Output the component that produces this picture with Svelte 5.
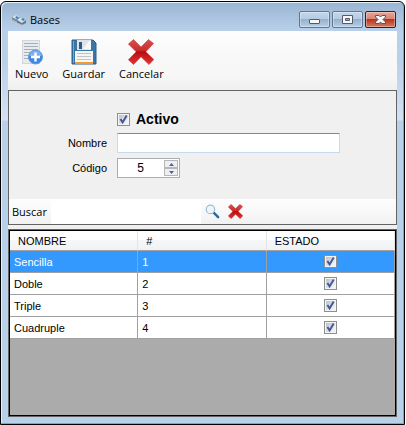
<script>
    let active = $state(true)
    let name = $state('')
    let code = $state(5)
    let search = $state('')
    let selected = $state(1)
    let rows = $state([
        { id: 1, name: 'Sencilla', active: true },
        { id: 2, name: 'Doble', active: true },
        { id: 3, name: 'Triple', active: true },
        { id: 4, name: 'Cuadruple', active: true }
    ])
</script>

{#snippet tick()}
    <svg class='tick' viewBox='0 0 13 13'>
        <path d='M3.4 6 L5.6 9.400 L9.700 2.600' fill='none' stroke='#43599b' stroke-width='2' />
    </svg>
{/snippet}

{#snippet cross()}
    <svg viewBox='0 0 26 26'>
        <defs>
            <linearGradient id='red' x1='0' y1='0' x2='0' y2='1'>
                <stop offset='0' stop-color='#d8504c' />
                <stop offset='.42' stop-color='#c9302f' />
                <stop offset='.5' stop-color='#b80d10' />
                <stop offset='1' stop-color='#e33434' />
            </linearGradient>
        </defs>
        <path d='M5.5 .5 L13 8 L20.5 .5 L25.5 4.5 L17.8 12.8 L25.8 20.5 L21 25.5 L13 17.8 L5.5 25.5 L.4 20.8 L8.2 12.8 L.4 5 Z' fill='url(#red)' stroke='#c93936' stroke-width='.6' />
    </svg>
{/snippet}

<div class='window'>
    <header>
        <svg class='app-icon' width='16' height='16' viewBox='0 0 16 16'>
            <path d='M1 5 L5 3 L9 5 L9 8 L5 10 L1 8 Z' fill='#758da3' />
            <path d='M1 5 L5 3 L9 5 L5 7 Z' fill='#dceaf4' />
            <path d='M6 8 L10 5 L15 8 L15 11 L11 13 L6 11 Z' fill='#66798b' />
            <path d='M6 8 L10 5 L15 8 L11 11 Z' fill='#d5e3ed' />
            <path d='M4 5 L6 4 L8 6 L6 7 Z M10 7 L12 6 L14 8 L12 9 Z' fill='#3c86bd' />
            <path d='M1 8 L5 10 M6 11 L11 13' stroke='#c8b6a3' />
        </svg>
        <h1>Bases</h1>
        <div class='window-btns'>
            <button aria-label='Minimizar'>
                <svg width='29' height='15' viewBox='0 0 29 15'>
                    <rect x='9.500' y='7.500' width='10' height='4' rx='.5' fill='#f7f7f7' stroke='#545a6b' />
                </svg>
            </button>
            <button aria-label='Maximizar'>
                <svg width='29' height='15' viewBox='0 0 29 15'>
                    <path fill-rule='evenodd' d='M9.500 3.500h10v8h-10z M12.500 6.500h4v2h-4z' fill='#f7f7f7' stroke='#545a6b' />
                </svg>
            </button>
            <button class='close-btn' aria-label='Cerrar'>
                <svg width='29' height='15' viewBox='0 0 29 15'>
                    <path d='M9.500 3.500h3.500l1.500 1.500l1.500 -1.500h3.500v1.500l-2.500 2.500l2.500 2.500v1.500h-3.500l-1.500 -1.500l-1.500 1.500h-3.500v-1.500l2.500 -2.500l-2.500 -2.500z' fill='#f7f7f7' stroke='#545468' />
                </svg>
            </button>
        </div>
    </header>

    <main>
        <div class='toolbar'>
            <button>
                <svg viewBox='0 0 26 26'>
                    <rect x='3.500' y='1.500' width='17' height='23' fill='#e8ebee' stroke='#d3d6da' />
                    <path d='M5 4.500h14M5 7.500h14M5 10.500h14M5 13.500h9M5 16.500h6M5 19.500h5' stroke='#a9afb6' />
                    <circle cx='16.500' cy='18' r='7' fill='#3b87e6' stroke='#7097c8' />
                    <path d='M10.500 17a6 5.500 0 0 1 12 0z' fill='#78b2f3' />
                    <path d='M16.500 13.500v9M12 18h9' stroke='#fff' stroke-width='2.400' />
                </svg>
                Nuevo
            </button>
            <button>
                <svg viewBox='0 0 26 26'>
                    <path d='M1 1h21l3 3v21h-24z' fill='#3977a8' stroke='#2d5e88' />
                    <path d='M2.500 2v22' stroke='#77a6cc' />
                    <rect x='6' y='1' width='14' height='10' fill='#dde3e8' />
                    <rect x='8' y='3' width='3' height='7' fill='#345a7a' />
                    <path d='M12 10l6 -8h2v8z' fill='#f7f9fa' />
                    <rect x='4' y='12' width='18' height='11' fill='#f5f5f3' />
                    <path d='M6 14.500h14M6 17.500h14M6 20.500h14' stroke='#c0c4c8' />
                    <rect x='4' y='23' width='18' height='2' fill='#f09a32' />
                </svg>
                Guardar
            </button>
            <button>
                {@render cross()}
                Cancelar
            </button>
        </div>

        <section class='panel'>
            <form class='fields'>
                <label class='active-row'>
                    <span class='check'>
                        <input type='checkbox' bind:checked={ active } />
                        {#if active}{@render tick()}{/if}
                    </span>
                    Activo
                </label>
                <label for='name'>Nombre</label>
                <input id='name' class='name' type='text' bind:value={ name } />
                <label for='code'>Código</label>
                <div class='spinner'>
                    <input id='code' type='text' inputmode='numeric' bind:value={ code } />
                    <div class='arrows'>
                        <button type='button' aria-label='Aumentar' onclick={ () => code++ }>
                            <svg width='5' height='3' viewBox='0 0 5 3'><path d='M0 3L2.500 0L5 3z' /></svg>
                        </button>
                        <button type='button' aria-label='Disminuir' onclick={ () => code-- }>
                            <svg width='5' height='3' viewBox='0 0 5 3'><path d='M0 0L2.500 3L5 0z' /></svg>
                        </button>
                    </div>
                </div>
            </form>

            <div class='search'>
                <label for='search'>Buscar</label>
                <input id='search' type='text' bind:value={ search } />
                <button aria-label='Buscar'>
                    <svg viewBox='0 0 16 16'>
                        <path d='M9 9L14 14' stroke='#2a66a3' stroke-width='2.600' stroke-linecap='round' />
                        <circle cx='5.800' cy='5.800' r='4.500' fill='#eef6fb' stroke='#9dbdd2' stroke-width='1.300' />
                    </svg>
                </button>
                <button aria-label='Limpiar' onclick={ () => { search = '' }}>
                    {@render cross()}
                </button>
            </div>
        </section>

        <div class='grid'>
            <table>
                <thead>
                    <tr>
                        <th>NOMBRE</th>
                        <th>#</th>
                        <th>ESTADO</th>
                    </tr>
                </thead>
                <tbody>
                    {#each rows as row (row.id)}
                        <tr class:selected={ row.id === selected } onclick={ () => { selected = row.id }}>
                            <td>{ row.name }</td>
                            <td>{ row.id }</td>
                            <td class='state'>
                                <span class='check'>
                                    <input type='checkbox' aria-label={ row.name } bind:checked={ row.active } />
                                    {#if row.active}{@render tick()}{/if}
                                </span>
                            </td>
                        </tr>
                    {/each}
                </tbody>
            </table>
        </div>
    </main>
</div>

<style>
    :global(body) {
        margin: 0;
        background: #fff;
    }

    .window {
        box-sizing: border-box;
        min-height: calc(100vh - 1px);
        margin: 1px 1px 0 0;
        padding: 0 7px 7px;
        border: 1px solid #000;
        border-radius: 6px 6px 0 0;
        background: linear-gradient(#9ab5d2, #b9d0ea 29px, #b9d0ea 60px, #d5e1f3 118px, #b9d0ea 119px);
        box-shadow: inset -1px -1px #35c5e4, inset 1px 1px #e6f0f8;
        display: flex;
        flex-direction: column;
        font-family: 'Liberation Sans', Arial, sans-serif;
        font-size: 11px;
        color: #000;
    }

    button {
        margin: 0;
        padding: 0;
        border: 0;
        background: none;
        font: inherit;
        color: inherit;
    }

    input {
        box-sizing: border-box;
        min-width: 0;
        margin: 0;
        font: inherit;
        outline: none;
    }

    svg {
        display: block;
    }

    header {
        height: 29px;
        display: flex;
        align-items: center;
        padding: 6px 1px 0 3px;
        box-sizing: border-box;
    }

    h1 {
        flex: 1;
        margin: 0 0 0 3px;
        font: 11px/16px 'Open Sans', 'Noto Sans', sans-serif;
    }

    .window-btns {
        display: flex;
        gap: 2px;
    }

    .window-btns button {
        border: 1px solid #5f7690;
        border-radius: 2px;
        background: linear-gradient(#c3d6ea, #b5cbe1 48%, #97b1cd 50%, #b5cee8);
        box-shadow: inset 0 0 0 1px rgba(255, 255, 255, .35);
    }

    .window-btns .close-btn {
        border-color: #4b1520;
        background: linear-gradient(#e7a598, #d98370 48%, #b8351c 50%, #d47a5e);
    }

    main {
        flex: 1;
        display: flex;
        flex-direction: column;
        background: #f0f0f0;
    }

    .toolbar {
        height: 59px;
        box-sizing: border-box;
        padding: 8px 7px 0;
        display: flex;
        align-items: flex-start;
        gap: 14px;
        background: linear-gradient(#fefefe, #f8f8f8 40%, #f7f7f7 75%, #efefef);
        font: 11px/18px 'Open Sans', 'Noto Sans', sans-serif;
    }

    .toolbar svg {
        width: 26px;
        height: 26px;
        margin: 0 auto;
    }

    .panel {
        border: 1px solid #646464;
    }

    .fields {
        padding: 19px 56px 21px 0;
        display: grid;
        grid-template-columns: 98px 1fr;
        gap: 5px 10px;
        align-items: center;
    }

    .fields > label {
        text-align: right;
    }

    .fields .active-row {
        grid-column: 2;
        display: flex;
        align-items: center;
        gap: 6px;
        font: bold 14px/18px 'Liberation Sans', Arial, sans-serif;
    }

    .check {
        position: relative;
        display: block;
        width: 13px;
        height: 13px;
    }

    .check input {
        appearance: none;
        display: block;
        width: 13px;
        height: 13px;
        border: 1px solid #8e8f8f;
        background: linear-gradient(135deg, #b5bcc5, #f3f3f4 80%);
        box-shadow: inset 0 0 0 1px #f4f4f4;
    }

    .tick {
        position: absolute;
        inset: 0;
        pointer-events: none;
    }

    .name {
        height: 20px;
        width: 100%;
        padding: 0 4px;
        border: 1px solid #c5daed;
        border-top-color: #5794bf;
        border-radius: 1px;
        background: #fff;
    }

    .spinner {
        box-sizing: border-box;
        width: 63px;
        height: 20px;
        padding: 1px;
        border: 1px solid #abadb3;
        background: #fff;
        display: flex;
    }

    .spinner input {
        flex: 1;
        padding: 0 2px 0 0;
        border: 0;
        background: none;
        text-align: center;
        font-size: 12px;
    }

    .arrows {
        width: 14px;
        display: grid;
        grid-template-rows: 1fr 1fr;
    }

    .arrows button {
        display: grid;
        place-items: center;
        border: 1px solid #b4b6ba;
        background: #efefef;
    }

    .arrows path {
        fill: #4a63ac;
    }

    .search {
        height: 25px;
        display: flex;
        align-items: center;
        gap: 8px;
        padding-left: 3px;
        background: linear-gradient(#fdfdfd, #f8f8f8 50%, #f1f1f1);
    }

    .search label {
        margin-right: -4px;
        font: 11px/16px 'Open Sans', 'Noto Sans', sans-serif;
    }

    .search input {
        width: 150px;
        height: 24px;
        padding: 0 4px;
        border: 0;
        background: #fff;
    }

    .search button {
        margin-left: -4px;
    }

    .search button + button {
        margin-left: 0;
    }

    .search svg {
        width: 15px;
        height: 15px;
    }

    .grid {
        flex: 1;
        margin-top: 4px;
        border: 1px solid #646464;
        outline: 1px solid #000;
        outline-offset: -2px;
        padding: 1px;
        background: #ababab;
    }

    table {
        width: 100%;
        table-layout: fixed;
        border-collapse: separate;
        border-spacing: 0;
        background: #fff;
    }

    th {
        height: 19px;
        padding: 0 8px;
        border-right: 1px solid #e3e5e8;
        border-bottom: 1px solid #a0a0a0;
        background: linear-gradient(#fff 45%, #f5f6f8 50%, #f1f2f4);
        font-weight: normal;
        text-align: left;
    }

    td {
        height: 21px;
        padding: 0 4px;
        border-right: 1px solid #a0a0a0;
        border-bottom: 1px solid #a0a0a0;
    }

    .state .check {
        margin: 0 auto;
    }

    .selected td {
        background: #3399ff;
        color: #fff;
    }
</style>
